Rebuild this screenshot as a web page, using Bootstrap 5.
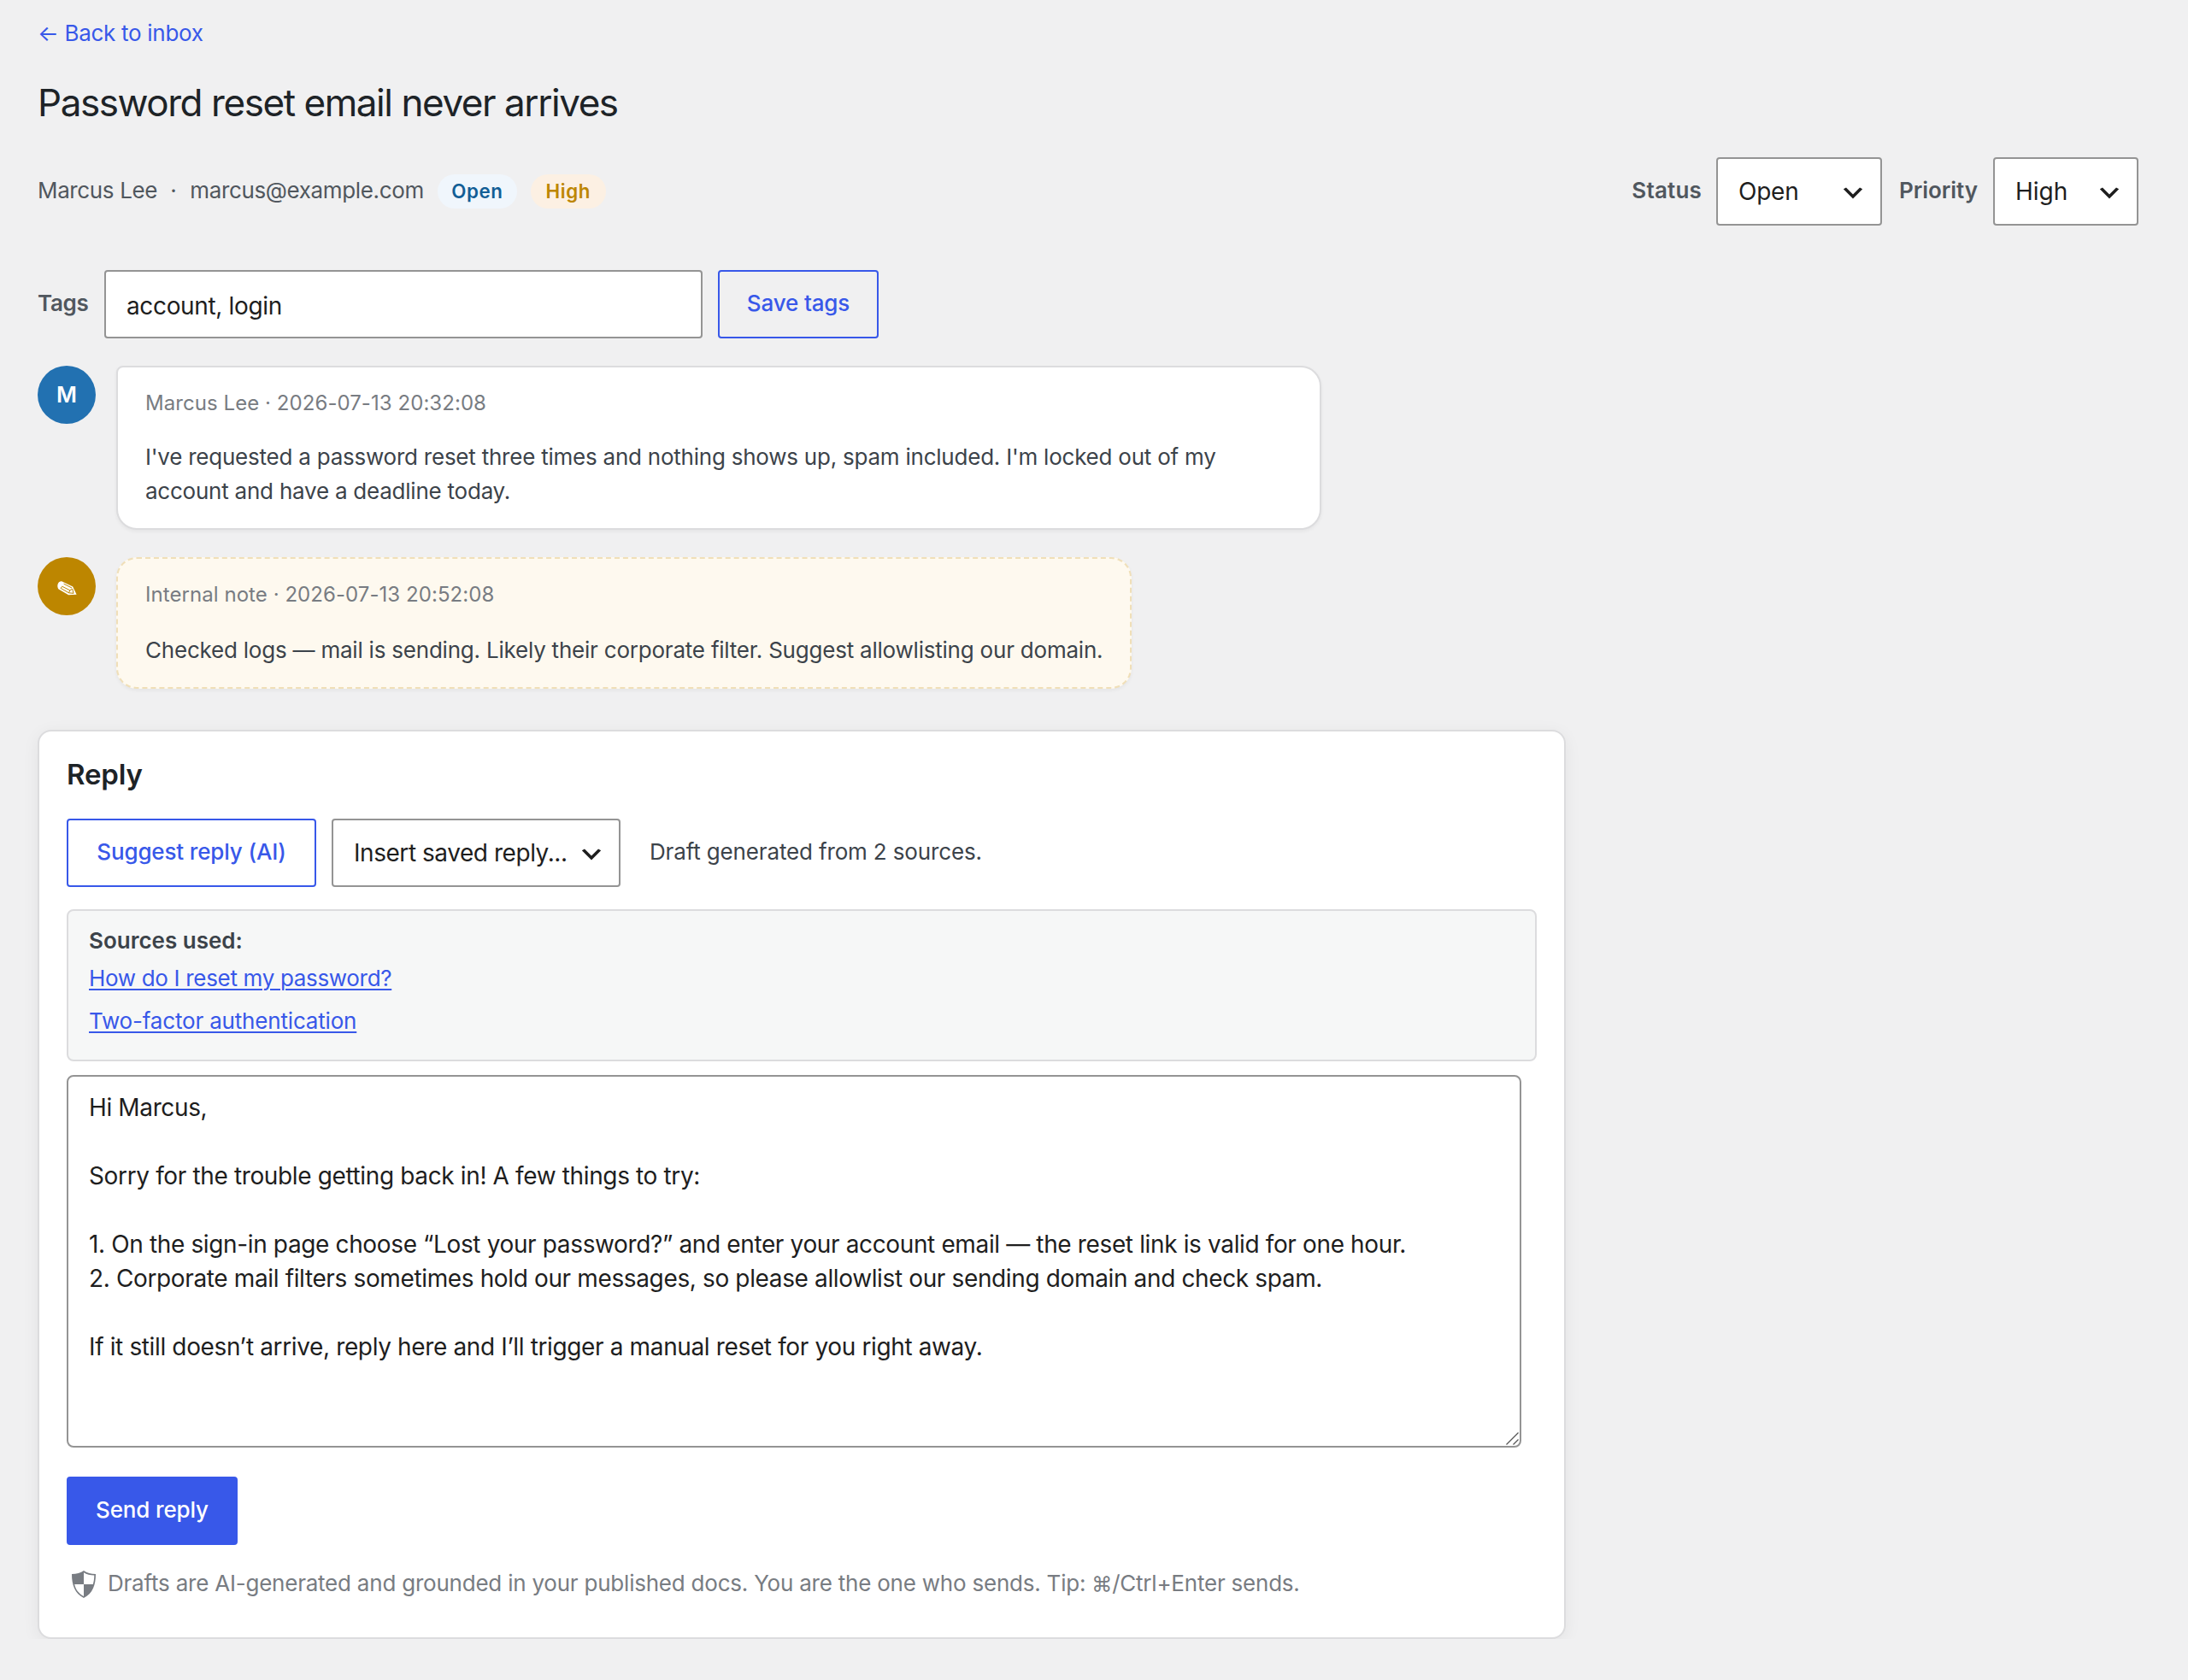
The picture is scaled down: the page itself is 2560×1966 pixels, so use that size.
<!DOCTYPE html>
<html lang="en">
<head>
<meta charset="utf-8">
<meta name="viewport" content="width=device-width, initial-scale=1">
<title>Password reset email never arrives</title>
<link href="https://cdn.jsdelivr.net/npm/bootstrap@5.3.0/dist/css/bootstrap.min.css" rel="stylesheet">
<style>
body{font-family:Inter,"DejaVu Sans",sans-serif;background:#f0f0f1;color:#3c434a;font-size:26px;line-height:40px;letter-spacing:-.23px;overflow:hidden}
.page-wrap{padding:19px 58px 0 44px}
.blue-link{color:#3858e9;letter-spacing:-.3px}
.page-title{font-size:44px;line-height:60px;letter-spacing:-1.44px;font-weight:400;color:#1d2327;margin:31px 0 34px}
.meta-row{height:80px}
.nudge{padding-bottom:3px}
.soft{color:#50575e;letter-spacing:-.36px}
.dot-sep{margin:0 16px 0 15px}
.chip{height:40px;border-radius:20px;font-size:22.3px;line-height:40px;font-weight:600;letter-spacing:.6px;text-align:center}
.chip-open{width:93px;margin-left:16px;background:#f0f6fc;color:#135e96}
.chip-high{width:88px;margin-left:16px;background:#fcf0e3;color:#bd8600}
.lbl{font-weight:600;color:#50575e;letter-spacing:-.05px}
.lbl-status{letter-spacing:.2px;margin-right:17px}
.lbl-prio{margin:0 18px 0 20px}
.lbl-tags{width:78px;letter-spacing:-.3px}
.ctl,.ctl:focus{height:80px;border:2px solid #949494;border-radius:4px;font-size:28px;line-height:40px;color:#1e1e1e;padding:0 24px;letter-spacing:-.25px;background-color:#fff;box-shadow:none}
.sel{padding-right:56px;background-size:32px 32px;background-position:right 16px top 24px;
 background-image:url("data:image/svg+xml,%3Csvg xmlns='http://www.w3.org/2000/svg' viewBox='0 0 20 20'%3E%3Cpath fill='%231e1e1e' d='M5 6l5 5 5-5 2 1-7 7-7-7 2-1z'/%3E%3C/svg%3E")}
.w-status{width:194px}
.w-prio{width:170px;letter-spacing:0}
.w-saved{width:338px;letter-spacing:-.45px;margin:0 34px 0 18px}
.w-tags,.w-tags:focus{width:700px;padding-top:4px;letter-spacing:-.35px}
.tag-row{margin-top:52px}
.bt{height:80px;border:2px solid #3858e9;border-radius:4px;font-size:26px;line-height:40px;font-weight:550;letter-spacing:-.15px;padding:0 0 3px;color:#3858e9}
.bt:hover{color:#3858e9}
.bt-save{width:188px;margin-left:18px}
.bt-suggest{width:292px}
.bt-fill,.bt-fill:hover{width:200px;margin-top:34px;background:#3858e9;color:#fff}
.msg{margin-top:32px;gap:24px}
.face{width:68px;height:68px;border-radius:50%;color:#fff;font-weight:600;flex:none;background:#2271b1}
.face-note{background:#bd8600}
.bubble{border:2px solid #dcdcde;border-radius:8px 24px 24px 24px;background:#fff;box-shadow:0 2px 4px rgba(0,0,0,.05);padding:24px 30px 24px 32px;white-space:nowrap}
.bubble-1{width:1410px;height:192px}
.bubble-note{width:1188px;height:154px;background:#fef9ef;border:2px dashed #f0dfb8;border-radius:24px}
.stamp{font-size:24px;line-height:36px;color:#787c82;letter-spacing:.06px}
.bubble-1 .said{margin-top:25px}
.bubble-note .said{margin-top:27px;letter-spacing:-.215px}
.panel{width:1788px;height:1064px;margin-top:48px;border:2px solid #dcdcde;border-radius:16px;background:#fff;box-shadow:0 4px 20px rgba(0,0,0,.06);padding:26px 32px 0}
.panel-title{font-size:33px;line-height:48px;font-weight:600;color:#1d2327;letter-spacing:-.15px;margin:0 0 28px}
.note-txt{letter-spacing:-.15px}
.src{height:178px;border:2px solid #dcdcde;border-radius:8px;background:#f6f7f7;padding:15px 24px 0;margin-top:26px}
.src a{color:#3858e9;text-decoration-thickness:2px;text-underline-offset:3px}
.src-head{font-weight:600;letter-spacing:0}
.src-1{margin-top:4px;letter-spacing:-.32px}
.src-2{margin-top:10px;letter-spacing:-.18px}
.draft{width:1702px;height:436px;margin-top:16px}
.draft textarea,.draft textarea:focus{width:100%;height:100%;border:2px solid #949494;border-radius:8px;padding:16px 24px 0;font-size:28px;line-height:40px;color:#1e1e1e;letter-spacing:-.365px;resize:none;overflow:hidden;box-shadow:none;background:#fff}
.grip{right:3px;bottom:3px}
.foot{color:#787c82;margin-top:25px;letter-spacing:-.22px}
.foot svg{margin:1px 14px 0 6px}
.cmd{font-size:24px}
</style>
</head>
<body>
<main class="page-wrap">
  <div><a href="#" class="blue-link text-decoration-none">← Back to inbox</a></div>
  <h1 class="page-title">Password reset email never arrives</h1>

  <div class="meta-row d-flex align-items-center">
    <div class="d-flex align-items-center soft">
      <span class="nudge">Marcus Lee</span><span class="nudge dot-sep">·</span><span class="nudge">marcus@example.com</span>
      <span class="chip chip-open">Open</span>
      <span class="chip chip-high">High</span>
    </div>
    <div class="d-flex align-items-center ms-auto">
      <label class="lbl lbl-status nudge" for="st">Status</label>
      <select id="st" class="form-select ctl sel w-status"><option>Open</option></select>
      <label class="lbl lbl-prio nudge" for="pr">Priority</label>
      <select id="pr" class="form-select ctl sel w-prio"><option>High</option></select>
    </div>
  </div>

  <div class="tag-row d-flex align-items-center">
    <label class="lbl lbl-tags nudge" for="tg">Tags</label>
    <input id="tg" type="text" class="form-control ctl w-tags" value="account, login">
    <button class="btn bt bt-save">Save tags</button>
  </div>

  <div class="msg d-flex align-items-start">
    <div class="face d-flex align-items-center justify-content-center">M</div>
    <div class="bubble bubble-1">
      <div class="stamp">Marcus Lee · 2026-07-13 20:32:08</div>
      <div class="said">I've requested a password reset three times and nothing shows up, spam included. I'm locked out of my<br>account and have a deadline today.</div>
    </div>
  </div>

  <div class="msg d-flex align-items-start">
    <div class="face face-note d-flex align-items-center justify-content-center">
      <svg class="mt-1" width="23" height="17" viewBox="0 0 23 17"><path fill="#fff" d="M.4 4.4C.8 1.8 2.8.2 5.2.3L18.2 6.6 22.6 15.8 13.2 16.2 1.6 9.6C.5 8.2.1 6.4.4 4.4z"/><path fill="none" stroke="#bd8600" stroke-width="1" d="M4.4 8.6L13.2 13.6M5.6 6.2L14.8 10.8M7.6 3.2L17 8M5.4 6.4L4 8.8M14.8 10.8L13.4 13.8 19 14.3 17.8 9.2z"/></svg>
    </div>
    <div class="bubble bubble-note">
      <div class="stamp">Internal note · 2026-07-13 20:52:08</div>
      <div class="said">Checked logs — mail is sending. Likely their corporate filter. Suggest allowlisting our domain.</div>
    </div>
  </div>

  <section class="panel">
    <h2 class="panel-title">Reply</h2>
    <div class="d-flex align-items-center">
      <button class="btn bt bt-suggest">Suggest reply (AI)</button>
      <select class="form-select ctl sel w-saved"><option>Insert saved reply...</option></select>
      <span class="nudge note-txt">Draft generated from 2 sources.</span>
    </div>
    <div class="src">
      <div class="src-head">Sources used:</div>
      <div class="src-1"><a href="#">How do I reset my password?</a></div>
      <div class="src-2"><a href="#">Two-factor authentication</a></div>
    </div>
    <div class="draft position-relative">
      <textarea class="form-control">Hi Marcus,

Sorry for the trouble getting back in! A few things to try:

1. On the sign-in page choose “Lost your password?” and enter your account email — the reset link is valid for one hour.
2. Corporate mail filters sometimes hold our messages, so please allowlist our sending domain and check spam.

If it still doesn’t arrive, reply here and I’ll trigger a manual reset for you right away.</textarea>
      <svg class="grip position-absolute" width="15" height="15" viewBox="0 0 15 15" fill="none" stroke="#555" stroke-width="1.3"><path d="M.5 14.5l14-14M8.500 14.500l6-6"/></svg>
    </div>
    <button class="btn bt bt-fill d-block">Send reply</button>
    <div class="foot d-flex align-items-center">
      <svg width="28" height="32" viewBox="0 0 28 32"><path fill="#787c82" fill-rule="evenodd" d="M14 0C10.500 2.600 5.500 4 0 4C0 17 3.500 26.500 14 32C24.500 26.500 28 17 28 4C22.500 4 17.500 2.600 14 0zM14 2.200C17.500 4.300 21.500 5.500 26.300 5.600C26.200 9.300 25.800 12.800 24.800 16H14zM14 16V30C7.700 26.500 4.500 22 3.200 16z"/></svg>
      <span>Drafts are AI-generated and grounded in your published docs. You are the one who sends. Tip: <span class="cmd">⌘</span>/Ctrl+Enter sends.</span>
    </div>
  </section>
</main>
<script src="https://cdn.jsdelivr.net/npm/bootstrap@5.3.0/dist/js/bootstrap.bundle.min.js"></script>
</body>
</html>
